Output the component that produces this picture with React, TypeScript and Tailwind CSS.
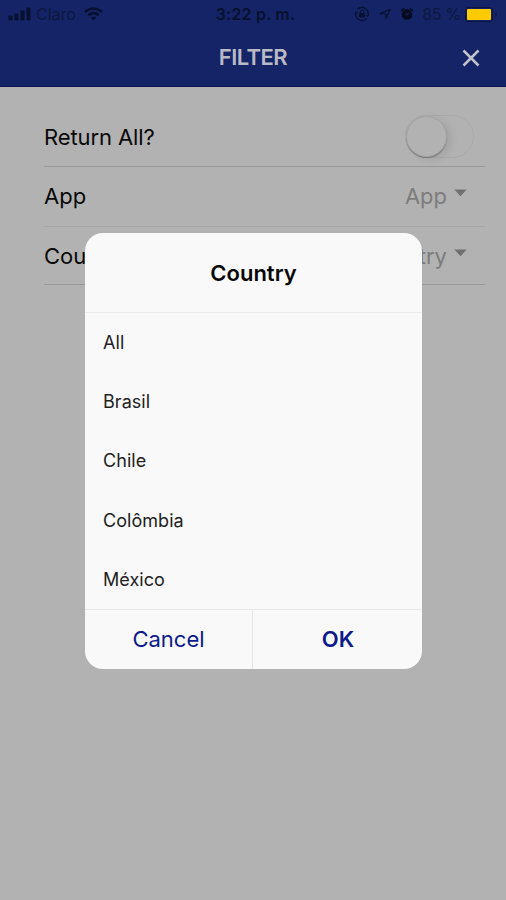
import React from "react";

const countries = ["All", "Brasil", "Chile", "Colômbia", "México"];

function StatusBar() {
  return (
    <div className="grid h-[28px] grid-cols-[1fr_auto_1fr] items-center pl-[8px] pr-[9px] text-[#07102f]">
      <div className="flex items-center">
        <svg width="24" height="14" viewBox="0 0 24 14" fill="currentColor">
          <rect x="0.5" y="8.5" width="4" height="5" rx="1" />
          <rect x="6.5" y="6.5" width="4" height="7" rx="1" />
          <rect x="12.5" y="3.5" width="4" height="10" rx="1" />
          <rect x="18.5" y="0.5" width="4" height="13" rx="1" />
        </svg>
        <span className="ml-[4px] text-[16px] leading-none text-[#0d1740]">Claro</span>
        <svg className="ml-[8px]" width="19" height="14" viewBox="0 0 19 14" fill="none" stroke="currentColor" strokeWidth="2.5">
          <path d="M1 5 Q9.5 -2 18 5" />
          <path d="M4.2 8.3 Q9.5 4 14.8 8.3" />
          <path d="M6.8 10.6 Q9.5 8.6 12.2 10.6 L9.5 13.4Z" fill="currentColor" stroke="none" />
        </svg>
      </div>
      <span className="pl-[6px] text-[16px] font-semibold leading-none tracking-[0.2px]">3:22 p. m.</span>
      <div className="flex items-center justify-end">
        <svg width="16" height="16" viewBox="0 0 16 16" fill="none" stroke="currentColor">
          <path d="M3.4 3.3A6.3 6.3 0 0 1 13.7 10M12.6 12.4A6.3 6.3 0 0 1 2.1 6" strokeWidth="1.2" />
          <path d="M12 9.2l1.6 1.5 1.2-2M.9 7.6l1.2-2 1.7 1.3" strokeWidth="1" />
          <rect x="5" y="7" width="6" height="4.4" rx=".8" fill="currentColor" stroke="none" />
          <path d="M6.3 7V5.6a1.7 1.7 0 0 1 3.4 0V7" strokeWidth="1" />
        </svg>
        <svg className="ml-[8px]" width="14" height="14" viewBox="0 0 14 14" fill="none" stroke="currentColor" strokeWidth="1.1" strokeLinejoin="round">
          <path d="M12.3 2.2 7.8 11.6V6.7H1.8Z" />
        </svg>
        <svg className="ml-[8px]" width="14" height="14" viewBox="0 0 14 14">
          <circle cx="7" cy="7.4" r="5.3" fill="#060b20" />
          <path d="M1.6 3.6 3.8 1.7M12.4 3.6 10.2 1.7" stroke="#060b20" strokeWidth="1.5" strokeLinecap="round" />
          <path d="M7 7.8 8.8 5.8M7 7.8 5.4 6.8" stroke="#142467" strokeWidth="1.1" />
        </svg>
        <span className="ml-[8px] text-[16px] leading-none tracking-[-0.25px] text-[#0d1740]">85 %</span>
        <div className="ml-[4px] h-[15px] w-[28px] rounded-[3px] border-[1.5px] border-[#0a1440] p-[1px]">
          <div className="h-full w-full rounded-[1px] bg-[#ffcb00]" />
        </div>
        <div className="ml-[2px] h-[5px] w-[2px] rounded-r-full bg-[#0d1a4c]" />
      </div>
    </div>
  );
}

function Caret() {
  return (
    <svg className="mb-[6px] ml-[7px]" width="13" height="8" viewBox="0 0 13 8">
      <path d="M0.3 0.5H12.7L6.5 7.2Z" fill="#707070" />
    </svg>
  );
}

function SelectRow({ label, last }: { label: string; last?: boolean }) {
  return (
    <div className={last ? "flex h-[58px] items-center border-b border-[#999999] pr-[18px]" : "flex h-[60px] items-center border-b border-[#a6a6a6] pr-[18px] pb-[1px]"}>
      <span className="flex-1">{label}</span>
      <span className="text-[#7c7c7c]">{label}</span>
      <Caret />
    </div>
  );
}

export default function App() {
  return (
    <div className="relative h-[900px] w-[506px] overflow-hidden bg-[#b2b2b2] font-[Inter,sans-serif]">
      <header className="h-[87px] border-b border-[#0a1450] bg-[#142467]">
        <StatusBar />
        <div className="grid h-[58px] grid-cols-[1fr_auto_1fr] items-center">
          <span />
          <h1 className="text-[22px] font-semibold leading-none tracking-[-0.55px] text-[#b9bac4]">FILTER</h1>
          <svg className="mr-[26px] mt-[1px] justify-self-end" width="18" height="18" viewBox="0 0 18 18" stroke="#c2c3cc" strokeWidth="2.5">
            <path d="M1.5 1.5 16.5 16.5M16.5 1.5 1.5 16.5" />
          </svg>
        </div>
      </header>

      <main className="ml-[44px] mr-[21px] pt-[20px] text-[22px] leading-none text-[#090909]">
        <div className="flex h-[60px] items-center border-b border-[#999999] pr-[11px]">
          <span className="flex-1 tracking-[-0.1px]">Return All?</span>
          <div className="h-[43px] w-[69px] rounded-full border-[1.5px] border-[#a9a9a9]">
            <div className="h-[41px] w-[41px] rounded-full border border-[#a4a4a4] bg-[#b2b2b2] shadow-[0px_1px_1px_rgba(0,0,0,0.28),5px_2px_7px_rgba(0,0,0,0.08)]" />
          </div>
        </div>
        <SelectRow label="App" />
        <SelectRow label="Country" last />
      </main>

      <div className="absolute left-[85px] top-[233px] flex h-[436px] w-[337px] flex-col overflow-hidden rounded-[18px] bg-[#f9f9f9]">
        <div className="flex h-[80px] shrink-0 items-center justify-center border-b border-[#ececec] pt-[1px] text-[22px] font-semibold leading-none text-[#080808]">
          Country
        </div>
        <ul className="h-[296px] shrink-0 pl-[18px] text-[18px] leading-none tracking-[0.05px] text-[#222222]">
          {countries.map((country) => (
            <li key={country} className="flex h-[59.4px] items-center">
              {country}
            </li>
          ))}
        </ul>
        <div className="flex h-[60px] shrink-0 border-t border-[#e9e9e9] text-[22px] leading-none text-[#0c1a8c]">
          <button className="w-[168px] border-r border-[#e4e4e4] pb-[1px]">Cancel</button>
          <button className="flex-1 pb-[1px] pl-[1px] font-semibold">OK</button>
        </div>
      </div>
    </div>
  );
}
